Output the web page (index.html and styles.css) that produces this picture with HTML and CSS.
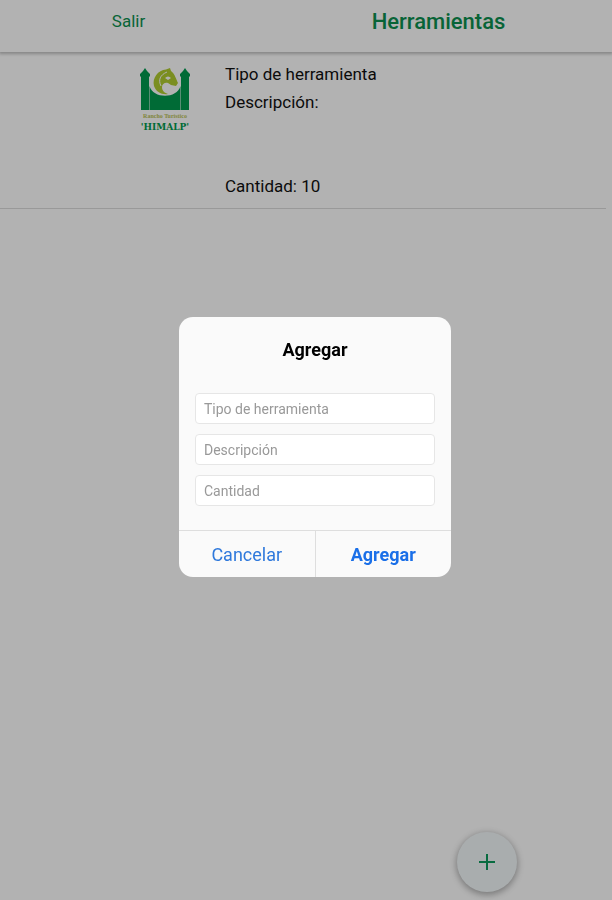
FILE: index.html
```html
<!DOCTYPE html>
<html lang="es">
<head>
    <meta charset="UTF-8">
    <meta name="viewport" content="width=device-width, initial-scale=1.0">
    <title>Herramientas</title>
    <link rel="stylesheet" href="styles.css">
</head>
<body>
    <header class="toolbar">
        <a class="exit" href="#">Salir</a>
        <h1>Herramientas</h1>
    </header>
    <main>
        <ul class="tool-list">
            <li class="tool">
                <svg class="logo" viewBox="0 0 50 64" role="img" aria-label="Rancho Turístico Chimalpa">
                    <!-- towers and wall -->
                    <g fill="#009a4e">
                        <path d="M0 8V6L3 3L5 0L7 3L10 6V8L9 9V42H1V9ZM40 8V6L43 3L45 0L47 3L50 6V8L49 9V42H41V9Z"/>
                        <path d="M9.500 18C13 31 37 31 40.500 18V42H9.500Z"/>
                    </g>
                    <!-- horse head -->
                    <path fill="#b0cc30" d="M30 0L31 3C35 6 36 11 38 15L36 18L31 17L28 15C25 14 22 16 22 19C22 23 25 25 28 26C22 27 16 24 14 18C12 10 18 2 26 1.500Z"/>
                    <path fill="none" stroke="#ffffff" stroke-width="1" d="M27 4C20 7 18 12 21 18"/>
                    <path fill="#ffffff" d="M25 10C27 8 29 8 31 10L28 12Z"/>
                    <text class="logo-small" x="25" y="50" text-anchor="middle">Rancho Turístico</text>
                    <text class="logo-name" x="25" y="62" text-anchor="middle">'HIMALP'</text>
                </svg>
                <div class="tool-info">
                    <p>Tipo de herramienta</p>
                    <p>Descripción:</p>
                    <p class="amount">Cantidad: 10</p>
                </div>
            </li>
        </ul>
    </main>
    <button type="button" class="add" aria-label="Agregar herramienta">
        <svg viewBox="0 0 16 16" width="16" height="16">
            <path d="M8 0V16M0 8H16" stroke="#0c9a5c" stroke-width="2"/>
        </svg>
    </button>

    <div class="backdrop">
        <form class="dialog" role="dialog" aria-labelledby="dialogTitle">
            <h2 id="dialogTitle">Agregar</h2>
            <div class="fields">
                <input type="text" id="tipo" name="tipo" placeholder="Tipo de herramienta" aria-label="Tipo de herramienta">
                <input type="text" id="descripcion" name="descripcion" placeholder="Descripción" aria-label="Descripción">
                <input type="text" id="cantidad" name="cantidad" placeholder="Cantidad" aria-label="Cantidad">
            </div>
            <div class="actions">
                <button type="button">Cancelar</button>
                <button type="submit" class="confirm">Agregar</button>
            </div>
        </form>
    </div>
</body>
</html>
```
FILE: styles.css
```css
* {
    box-sizing: border-box;
}
body, h1, h2, p, ul {
    margin: 0;
    padding: 0;
}
body {
    min-height: 100vh;
    font-family: Roboto, "Liberation Sans", sans-serif;
    color: #111111;
    background-color: #ffffff;
}
.toolbar {
    display: grid;
    grid-template-columns: 42% 1fr;
    align-items: center;
    height: 52px;
    padding-bottom: 10px;
    box-shadow: 0 1px 3px 1px rgba(0, 0, 0, 0.25);
}
.exit {
    justify-self: center;
    font-size: 17px;
    color: #0c9050;
    text-decoration: none;
}
.toolbar h1 {
    justify-self: center;
    padding-left: 8px;
    font-size: 22px;
    font-weight: 500;
    color: #0c9050;
}
.tool-list {
    list-style: none;
}
.tool {
    display: flex;
    align-items: flex-start;
    gap: 35px;
    margin-right: 6px;
    padding: 8px 0 8px 140px;
    border-bottom: 1px solid #dcdcdc;
}
.logo {
    flex: none;
    width: 50px;
    height: 64px;
    margin-top: 8px;
    overflow: visible;
}
.logo-small {
    font-family: "Liberation Serif", serif;
    font-size: 6px;
    font-weight: bold;
    fill: #b9bf55;
}
.logo-name {
    font-family: "DejaVu Serif Condensed", "DejaVu Serif", serif;
    font-size: 10px;
    font-weight: bold;
    fill: #009a4e;
}
.tool-info {
    font-size: 17px;
    line-height: 28px;
}
.amount {
    margin-top: 56px;
}
.add {
    position: fixed;
    right: 95px;
    bottom: 8px;
    display: flex;
    align-items: center;
    justify-content: center;
    width: 60px;
    height: 60px;
    padding: 0;
    border: none;
    border-radius: 50%;
    background-color: #f3f8fa;
    box-shadow: 0 2px 6px 1px rgba(0, 0, 0, 0.3);
}
.backdrop {
    position: fixed;
    inset: 0;
    display: flex;
    align-items: center;
    justify-content: center;
    padding: 0 0 6px 18px;
    background-color: rgba(0, 0, 0, 0.3);
}
.dialog {
    width: 272px;
    overflow: hidden;
    border-radius: 14px;
    background-color: #fafafa;
}
.dialog h2 {
    padding: 20px 16px 30px;
    font-size: 18px;
    font-weight: 700;
    line-height: 26px;
    text-align: center;
    color: #000000;
}
.fields {
    display: flex;
    flex-direction: column;
    gap: 10px;
    padding: 0 16px 24px;
}
.fields input {
    width: 100%;
    height: 31px;
    padding: 0 8px;
    border: 1px solid #e6e6e6;
    border-radius: 4px;
    font-family: inherit;
    font-size: 14px;
    background-color: #ffffff;
}
.fields input::placeholder {
    color: #999999;
}
.actions {
    display: flex;
    border-top: 1px solid #dedede;
}
.actions button {
    flex: 1;
    height: 46px;
    padding: 0;
    border: none;
    font-family: inherit;
    font-size: 18px;
    color: #2f79dc;
    background-color: transparent;
}
.actions .confirm {
    border-left: 1px solid #dedede;
    font-weight: 700;
    color: #1a6fe8;
}
```
